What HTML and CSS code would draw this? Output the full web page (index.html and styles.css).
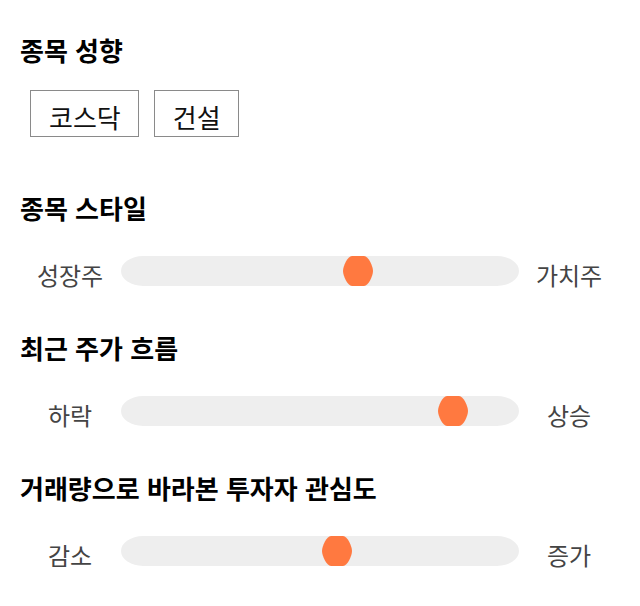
FILE: index.html
```html
<!DOCTYPE html>
<html lang="ko">
<head>
  <meta charset="UTF-8">
  <title>종목 분석</title>
  <link rel="stylesheet" href="styles.css">
</head>
<body>
  <div class="container">
    <div class="section first">
      <h3 class="title">종목 성향</h3>
      <div class="tags">
        <span class="tag">코스닥</span>
        <span class="tag">건설</span>
      </div>
    </div>
    <div class="section">
      <h3 class="title">종목 스타일</h3>
      <div class="scale">
        <span class="label">성장주</span>
        <div class="track">
          <svg class="thumb" style="left: 59.5%;" viewBox="0 0 30 30"><path d="M9 0H21C25.5 0 30 10.5 30 15C30 19.5 25.5 30 21 30H9C4.5 30 0 19.5 0 15C0 10.5 4.5 0 9 0Z"/></svg>
        </div>
        <span class="label">가치주</span>
      </div>
    </div>
    <div class="section">
      <h3 class="title">최근 주가 흐름</h3>
      <div class="scale">
        <span class="label">하락</span>
        <div class="track">
          <svg class="thumb" style="left: 83.4%;" viewBox="0 0 30 30"><path d="M9 0H21C25.5 0 30 10.5 30 15C30 19.5 25.5 30 21 30H9C4.5 30 0 19.5 0 15C0 10.5 4.5 0 9 0Z"/></svg>
        </div>
        <span class="label">상승</span>
      </div>
    </div>
    <div class="section">
      <h3 class="title">거래량으로 바라본 투자자 관심도</h3>
      <div class="scale">
        <span class="label">감소</span>
        <div class="track">
          <svg class="thumb" style="left: 54.3%;" viewBox="0 0 30 30"><path d="M9 0H21C25.5 0 30 10.5 30 15C30 19.5 25.5 30 21 30H9C4.5 30 0 19.5 0 15C0 10.5 4.5 0 9 0Z"/></svg>
        </div>
        <span class="label">증가</span>
      </div>
    </div>
  </div>
</body>
</html>
```

FILE: styles.css
```css
body {
  margin: 0;
  background: #fff;
  font-family: "Noto Sans CJK KR", "Noto Sans", sans-serif;
}
.container {
  padding: 35px 20px 0 20px;
}
.section {
  margin-bottom: 47px;
}
.section.first {
  margin-bottom: 56px;
}
.title {
  margin: 0 0 33px 0;
  font-size: 26px;
  line-height: 30px;
  font-weight: bold;
  color: #000;
}
.first .title {
  margin-bottom: 25px;
}
.tags {
  display: flex;
  gap: 15px;
  padding-left: 10px;
}
.tag {
  display: inline-block;
  height: 45px;
  line-height: 52px;
  padding: 0 17px 0 18px;
  border: 1px solid #8a8a8a;
  font-size: 26px;
  color: #111;
}
.scale {
  display: flex;
  align-items: flex-start;
  height: 30px;
}
.label {
  width: 100px;
  text-align: center;
  font-size: 24px;
  line-height: 38px;
  color: #444;
}
.track {
  position: relative;
  flex: 0 0 398px;
  height: 30px;
  margin-left: 1px;
  background: #eeeeee;
  border-radius: 22px / 15px;
}
.thumb {
  position: absolute;
  top: 0;
  width: 30px;
  height: 30px;
  margin-left: -15px;
  fill: #ff7940;
}
```
